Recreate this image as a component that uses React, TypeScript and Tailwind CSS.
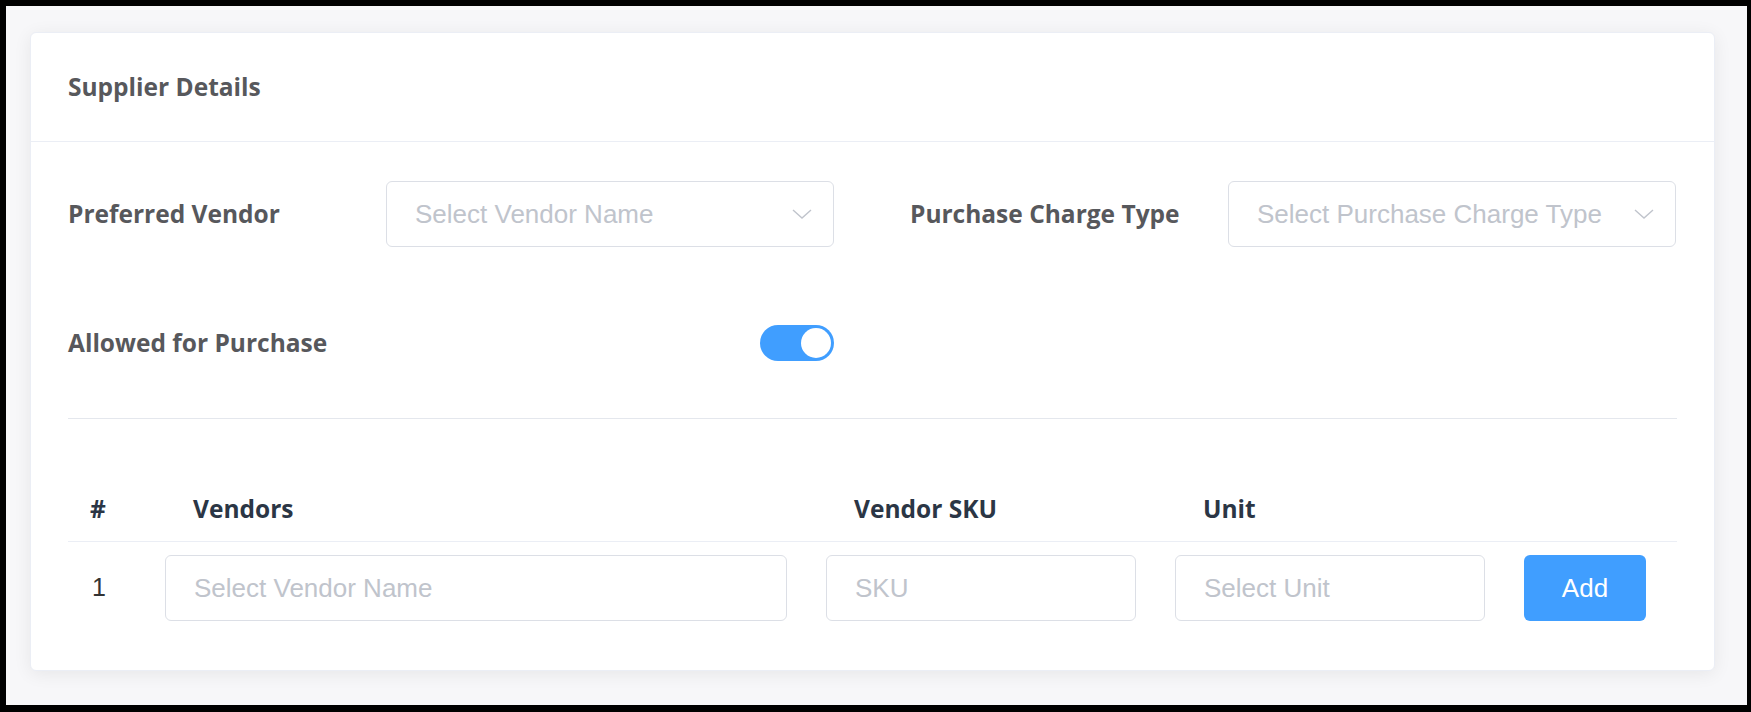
import React from 'react'

const labelFont = { fontFamily: '"Open Sans", "Noto Sans", sans-serif' }

function Chevron() {
  return (
    <svg width="20" height="10" viewBox="0 0 20 10" className="shrink-0">
      <polyline points="1,1 10,9 19,1" fill="none" stroke="#c0c4cc" strokeWidth="1.4" />
    </svg>
  )
}

function SelectBox({ placeholder }: { placeholder: string }) {
  return (
    <div className="flex h-[66px] w-[448px] items-center justify-between rounded-[6px] border border-[#dcdfe6] bg-white pl-[28px] pr-[21px]">
      <span className="font-['Liberation_Sans',Arial,sans-serif] text-[26px] text-[#c0c4cc]">{placeholder}</span>
      <Chevron />
    </div>
  )
}

function InputBox({ placeholder }: { placeholder: string }) {
  return (
    <div className="flex h-[66px] items-center rounded-[6px] border border-[#dcdfe6] bg-white pl-[28px]">
      <span className="font-['Liberation_Sans',Arial,sans-serif] text-[26px] text-[#c0c4cc]">{placeholder}</span>
    </div>
  )
}

export default function App() {
  return (
    <div className="flex h-[712px] w-[1751px] flex-col bg-black pb-[7px] pl-[6px] pr-[4px] pt-[6px]">
      <div className="flex flex-1 flex-col bg-[#f7f7f9] pb-[34px] pl-[24px] pr-[32px] pt-[26px]">
        {/* Card */}
        <div className="flex flex-1 flex-col rounded-[6px] border border-[#ebeef5] bg-white shadow-[0_3px_18px_0_rgba(0,0,0,0.07)]">
          <div className="flex h-[109px] items-center border-b border-[#ebeef5] pl-[37px]">
            <h2 className="text-[24.5px] leading-[32px] font-bold text-[#57585c]" style={labelFont}>Supplier Details</h2>
          </div>

          <div className="px-[37px] pt-[39px]">
            {/* Row 1 */}
            <div className="flex gap-[76px]">
              <div className="flex items-center">
                <label className="w-[318px] text-[24.5px] leading-[32px] font-bold text-[#57585c]" style={labelFont}>Preferred Vendor</label>
                <SelectBox placeholder="Select Vendor Name" />
              </div>
              <div className="flex items-center">
                <label className="w-[318px] text-[24.5px] leading-[32px] font-bold text-[#57585c]" style={labelFont}>Purchase Charge Type</label>
                <SelectBox placeholder="Select Purchase Charge Type" />
              </div>
            </div>

            {/* Row 2 */}
            <div className="mt-[63px] flex h-[66px] items-center">
              <label className="w-[318px] text-[24.5px] leading-[32px] font-bold text-[#57585c]" style={labelFont}>Allowed for Purchase</label>
              <div className="flex w-[448px] justify-end">
                <button className="flex h-[36px] w-[74px] items-center justify-end rounded-full bg-[#409eff] p-[3px]">
                  <span className="h-[30px] w-[30px] rounded-full bg-white" />
                </button>
              </div>
            </div>

            <div className="mt-[42px] h-px bg-[#e4e7ed]" />

            {/* Vendors table */}
            <div className="mt-[74px] grid grid-cols-[58px_622px_310px_310px_122px] gap-x-[39px] border-b border-[#ebeef5] pb-[16px]">
              <div className="pl-[22px] text-[24.5px] leading-[32px] font-bold text-[#2b3645]" style={labelFont}>#</div>
              <div className="pl-[28px] text-[24.5px] leading-[32px] font-bold text-[#2b3645]" style={labelFont}>Vendors</div>
              <div className="pl-[28px] text-[24.5px] leading-[32px] font-bold text-[#2b3645]" style={labelFont}>Vendor SKU</div>
              <div className="pl-[28px] text-[24.5px] leading-[32px] font-bold text-[#2b3645]" style={labelFont}>Unit</div>
              <div />
            </div>
            <div className="grid grid-cols-[58px_622px_310px_310px_122px] items-center gap-x-[39px] pt-[13px]">
              <div className="pl-[24px] font-['Liberation_Sans',Arial,sans-serif] text-[25px] text-[#333]">1</div>
              <InputBox placeholder="Select Vendor Name" />
              <InputBox placeholder="SKU" />
              <InputBox placeholder="Select Unit" />
              <button className="h-[66px] rounded-[6px] bg-[#409eff] font-['Liberation_Sans',Arial,sans-serif] text-[26px] text-white">Add</button>
            </div>
          </div>
        </div>
      </div>
    </div>
  )
}
